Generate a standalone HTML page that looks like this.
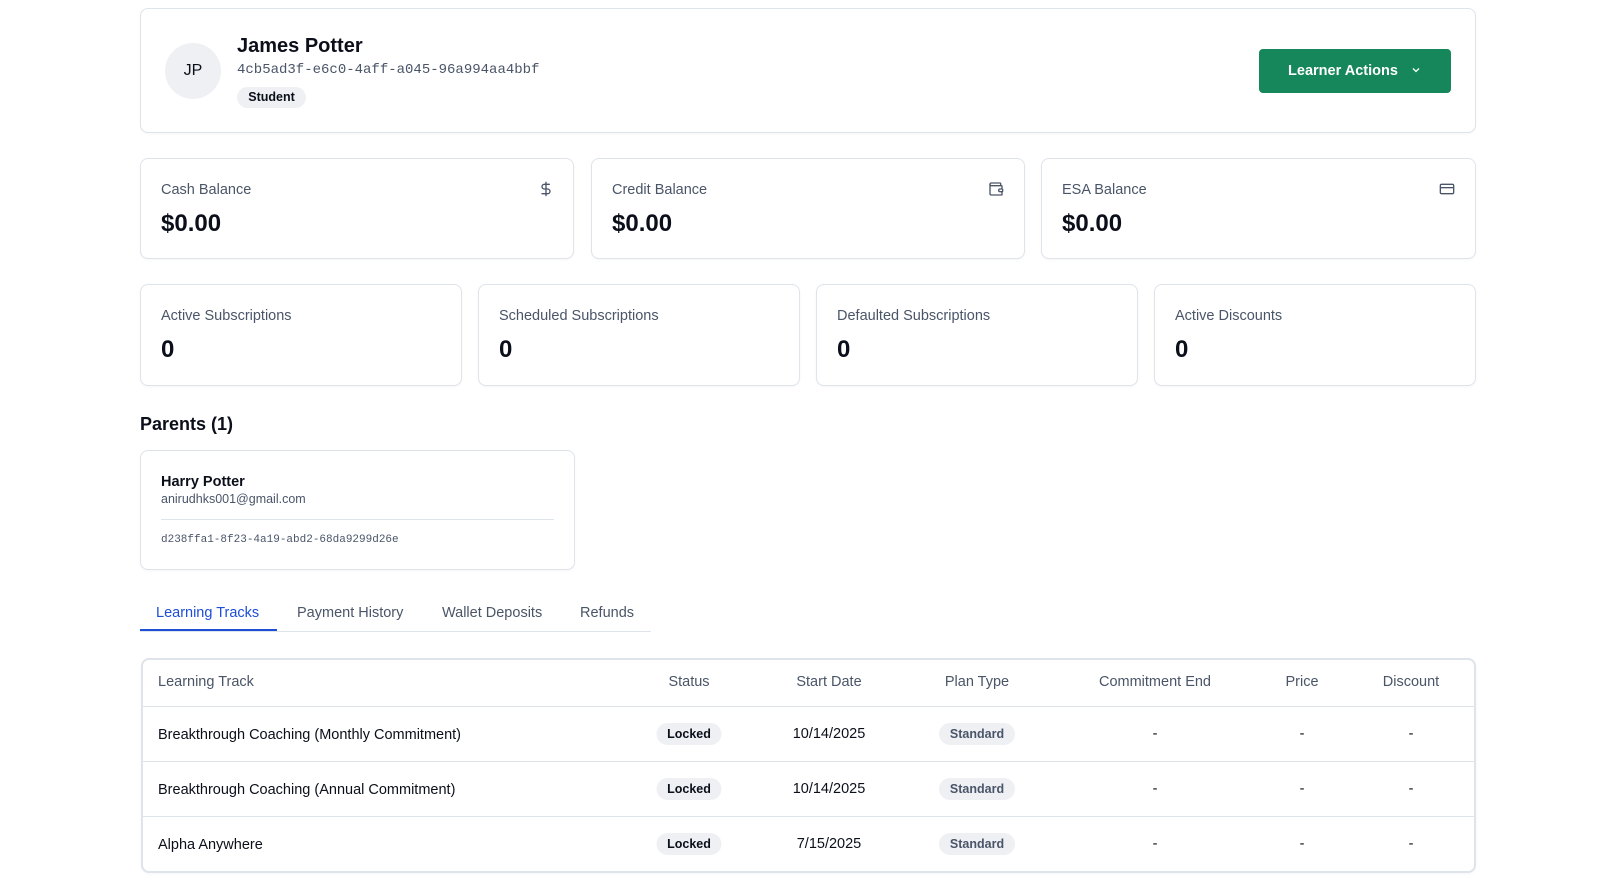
<!DOCTYPE html>
<html><head><meta charset="utf-8"><style>
*{box-sizing:border-box;margin:0;padding:0}
body{width:1618px;height:881px;background:#fff;font-family:"Liberation Sans",Arial,sans-serif;color:#0b0f1a;position:relative;overflow:hidden}
.card{position:absolute;border:1px solid #dfe3ea;border-radius:8px;background:#fff;box-shadow:0 1px 2px rgba(0,0,0,.04)}
.abs{position:absolute;white-space:nowrap}
.lbl{font-size:14.5px;color:#4a5568}
.val{font-size:24px;font-weight:bold;color:#0b0f1a}
.mono{font-family:"Liberation Mono",monospace}
.pill{position:absolute;border-radius:11px;background:#eef0f4;font-size:12.5px;font-weight:bold;text-align:center;line-height:22px;transform:translate(-50%,-50%)}
.c{transform:translate(-50%,-50%)}
.row{position:absolute;left:142px;width:1333px;height:1px;background:#dfe3ea}
.th{font-size:14.5px;color:#4a5568}
.td{font-size:14.5px;color:#0b0f1a}
</style></head><body>

<div class="card" style="left:140px;top:8px;width:1336px;height:125px"></div>
<div class="abs" style="left:165px;top:43px;width:56px;height:56px;border-radius:50%;background:#eef0f4;text-align:center;line-height:56px;font-size:16px">JP</div>
<div class="abs" style="left:237px;top:35px;font-size:20px;font-weight:bold">James Potter</div>
<div class="abs mono" style="left:237px;top:62px;font-size:14px;color:#4a5568">4cb5ad3f-e6c0-4aff-a045-96a994aa4bbf</div>
<div class="abs" style="left:237px;top:87px;width:69px;height:21px;border-radius:11px;background:#eef0f4;font-size:12.5px;font-weight:bold;text-align:center;line-height:21px">Student</div>
<div class="abs" style="left:1259px;top:49px;width:192px;height:44px;border-radius:4px;background:#16875a;color:#fff;font-size:14.5px;font-weight:bold;text-align:center;line-height:44px">Learner Actions <svg width="12" height="12" viewBox="0 0 12 12" style="margin-left:8px;vertical-align:-1px"><path d="M3 4.5l3 3 3-3" stroke="#fff" stroke-width="1.3" fill="none"/></svg></div>

<div class="card" style="left:140px;top:158px;width:434px;height:101px"></div>
<div class="card" style="left:591px;top:158px;width:434px;height:101px"></div>
<div class="card" style="left:1041px;top:158px;width:435px;height:101px"></div>
<div class="abs lbl" style="left:161px;top:182px">Cash Balance</div>
<div class="abs val" style="left:161px;top:210px">$0.00</div>
<div class="abs lbl" style="left:612px;top:182px">Credit Balance</div>
<div class="abs val" style="left:612px;top:210px">$0.00</div>
<div class="abs lbl" style="left:1062px;top:182px">ESA Balance</div>
<div class="abs val" style="left:1062px;top:210px">$0.00</div>
<svg class="abs" style="left:538px;top:181px" width="16" height="16" viewBox="0 0 24 24" fill="none" stroke="#4a5568" stroke-width="2" stroke-linecap="round"><path d="M12 2v20M17 5H9.5a3.5 3.5 0 0 0 0 7h5a3.5 3.5 0 0 1 0 7H6"/></svg>
<svg class="abs" style="left:988px;top:181px" width="16" height="16" viewBox="0 0 24 24" fill="none" stroke="#4a5568" stroke-width="2" stroke-linecap="round" stroke-linejoin="round"><path d="M19 7V4a1 1 0 0 0-1-1H5a2 2 0 0 0 0 4h15a1 1 0 0 1 1 1v4h-3a2 2 0 0 0 0 4h3a1 1 0 0 0 1-1v-2a1 1 0 0 0-1-1"/><path d="M3 5v14a2 2 0 0 0 2 2h15a1 1 0 0 0 1-1v-4"/></svg>
<svg class="abs" style="left:1439px;top:181px" width="16" height="16" viewBox="0 0 24 24" fill="none" stroke="#4a5568" stroke-width="2"><rect x="2" y="5" width="20" height="14" rx="2"/><path d="M2 10h20"/></svg>

<div class="card" style="left:140px;top:284px;width:322px;height:102px"></div>
<div class="card" style="left:478px;top:284px;width:322px;height:102px"></div>
<div class="card" style="left:816px;top:284px;width:322px;height:102px"></div>
<div class="card" style="left:1154px;top:284px;width:322px;height:102px"></div>
<div class="abs lbl" style="left:161px;top:308px">Active Subscriptions</div>
<div class="abs val" style="left:161px;top:336px">0</div>
<div class="abs lbl" style="left:499px;top:308px">Scheduled Subscriptions</div>
<div class="abs val" style="left:499px;top:336px">0</div>
<div class="abs lbl" style="left:837px;top:308px">Defaulted Subscriptions</div>
<div class="abs val" style="left:837px;top:336px">0</div>
<div class="abs lbl" style="left:1175px;top:308px">Active Discounts</div>
<div class="abs val" style="left:1175px;top:336px">0</div>

<div class="abs" style="left:140px;top:414px;font-size:18px;font-weight:bold">Parents (1)</div>
<div class="card" style="left:140px;top:450px;width:435px;height:120px"></div>
<div class="abs" style="left:161px;top:474px;font-size:14.5px;font-weight:bold">Harry Potter</div>
<div class="abs" style="left:161px;top:492px;font-size:12.5px;color:#4a5568">anirudhks001@gmail.com</div>
<div class="abs" style="left:161px;top:519px;width:393px;height:1px;background:#dfe3ea"></div>
<div class="abs mono" style="left:161px;top:534px;font-size:11px;color:#4a5568">d238ffa1-8f23-4a19-abd2-68da9299d26e</div>

<div class="abs" style="left:140px;top:631px;width:511px;height:1px;background:#dfe3ea"></div>
<div class="abs" style="left:140px;top:629px;width:137px;height:2px;background:#1d4ed8"></div>
<div class="abs" style="left:156px;top:605px;font-size:14.5px;color:#1d4ed8">Learning Tracks</div>
<div class="abs" style="left:297px;top:605px;font-size:14.5px;color:#4a5568">Payment History</div>
<div class="abs" style="left:442px;top:605px;font-size:14.5px;color:#4a5568">Wallet Deposits</div>
<div class="abs" style="left:580px;top:605px;font-size:14.5px;color:#4a5568">Refunds</div>

<div class="card" style="left:141px;top:658px;width:1335px;height:215px;border-width:2px;border-color:#dfe3ea"></div>
<div class="row" style="top:706px"></div>
<div class="row" style="top:761px"></div>
<div class="row" style="top:816px"></div>

<div class="abs th" style="left:158px;top:674px">Learning Track</div>
<div class="abs th c" style="left:689px;top:682px">Status</div>
<div class="abs th c" style="left:829px;top:682px">Start Date</div>
<div class="abs th c" style="left:977px;top:682px">Plan Type</div>
<div class="abs th c" style="left:1155px;top:682px">Commitment End</div>
<div class="abs th c" style="left:1302px;top:682px">Price</div>
<div class="abs th c" style="left:1411px;top:682px">Discount</div>

<div class="abs td" style="left:158px;top:727px">Breakthrough Coaching (Monthly Commitment)</div>
<div class="pill" style="left:689px;top:734px;width:65px">Locked</div>
<div class="abs td c" style="left:829px;top:734px">10/14/2025</div>
<div class="pill" style="left:977px;top:734px;width:76px;color:#4a5568">Standard</div>
<div class="abs td c" style="left:1155px;top:734px">-</div>
<div class="abs td c" style="left:1302px;top:734px">-</div>
<div class="abs td c" style="left:1411px;top:734px">-</div>

<div class="abs td" style="left:158px;top:782px">Breakthrough Coaching (Annual Commitment)</div>
<div class="pill" style="left:689px;top:789px;width:65px">Locked</div>
<div class="abs td c" style="left:829px;top:789px">10/14/2025</div>
<div class="pill" style="left:977px;top:789px;width:76px;color:#4a5568">Standard</div>
<div class="abs td c" style="left:1155px;top:789px">-</div>
<div class="abs td c" style="left:1302px;top:789px">-</div>
<div class="abs td c" style="left:1411px;top:789px">-</div>

<div class="abs td" style="left:158px;top:837px">Alpha Anywhere</div>
<div class="pill" style="left:689px;top:844px;width:65px">Locked</div>
<div class="abs td c" style="left:829px;top:844px">7/15/2025</div>
<div class="pill" style="left:977px;top:844px;width:76px;color:#4a5568">Standard</div>
<div class="abs td c" style="left:1155px;top:844px">-</div>
<div class="abs td c" style="left:1302px;top:844px">-</div>
<div class="abs td c" style="left:1411px;top:844px">-</div>
</body></html>
